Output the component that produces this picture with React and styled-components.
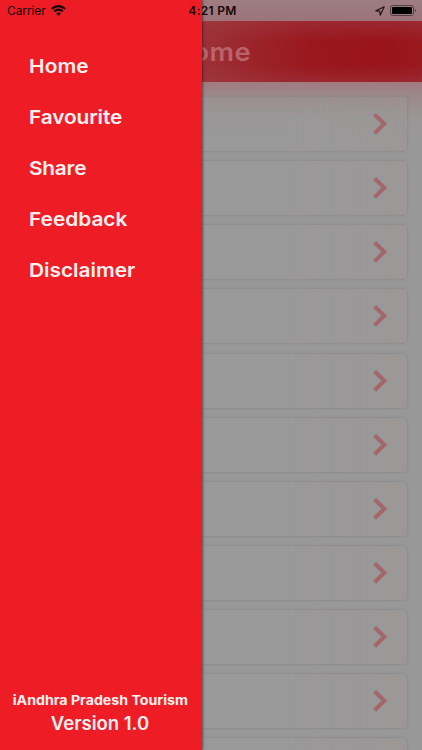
import React from "react";
import styled, { createGlobalStyle } from "styled-components";

const Global = createGlobalStyle`
    * {
        box-sizing: border-box;
    }
    body {
        margin: 0;
        background-color: #999898;
        font-family: Inter, "Open Sans", sans-serif;
    }
`;

const Screen = styled.div`
    position: relative;
    width: 100%;
    height: 750px;
    overflow: hidden;
    background: linear-gradient(#9e7d80 0px, #9c747a 21px, #a17b80 82px, #9c8789 94px, #999696 116px, #999898 140px);
`;

const StatusBar = styled.div`
    position: absolute;
    z-index: 3;
    top: 0;
    left: 0;
    right: 0;
    height: 21px;
    padding: 0 5px 0 7px;
    display: grid;
    grid-template-columns: 1fr auto 1fr;
    align-items: center;
    font-size: 12px;
    color: #160709;
`;

const Side = styled.div`
    display: flex;
    align-items: center;
    justify-content: ${(props) => (props.$end ? "flex-end" : "flex-start")};
    gap: 5px;
    letter-spacing: -0.1px;
`;

const Time = styled.span`
    padding-left: 1px;
    font-weight: 600;
    letter-spacing: 0.3px;
`;

const Header = styled.header`
    height: 61px;
    margin-top: 21px;
    display: flex;
    align-items: center;
    justify-content: center;
    background:
        linear-gradient(rgba(158, 60, 67, 0.5), rgba(158, 30, 36, 0) 35%, rgba(158, 30, 36, 0) 72%, rgba(158, 60, 67, 0.45)),
        linear-gradient(90deg, #9c3138 48%, #9b2429 60%, #99171d 74%, #98141a 92%, #99191f);
`;

const Title = styled.h1`
    margin: 0;
    font-size: 25px;
    font-weight: 600;
    letter-spacing: 0.4px;
    color: #b9636a;
    transform: scaleX(1.09);
`;

const List = styled.div`
    display: flex;
    flex-direction: column;
    gap: 8.15px;
    padding: 14px 14px 0;
`;

const Card = styled.div`
    flex: none;
    height: 56px;
    padding-right: 17px;
    display: flex;
    align-items: center;
    justify-content: flex-end;
    border: 1px solid rgba(130, 126, 128, 0.38);
    border-radius: 5px;
    box-shadow: 0 0 2px rgba(115, 110, 112, 0.28);
    background: linear-gradient(90deg, rgba(155, 155, 155, 0.35) 70%, rgba(158, 151, 150, 0.4));
`;

const Drawer = styled.nav`
    position: absolute;
    z-index: 2;
    top: 0;
    left: 0;
    width: 202px;
    height: 100%;
    padding: 41px 0 14px;
    display: flex;
    flex-direction: column;
    justify-content: space-between;
    background-color: #ee1d25;
    box-shadow: 0 0 3px rgba(25, 5, 7, 0.9);
    color: #fff0f0;
`;

const Menu = styled.div`
    display: flex;
    flex-direction: column;
    padding-left: 28.6px;
`;

// the letters are a little wider than the font's own
const MenuItem = styled.a`
    height: 51px;
    line-height: 51px;
    font-size: 19.3px;
    font-weight: 600;
    letter-spacing: ${(props) => props.$spacing}px;
    transform: scaleX(1.08);
    transform-origin: left;
`;

const Footer = styled.footer`
    display: flex;
    flex-direction: column;
    align-items: center;
    white-space: nowrap;
`;

const AppName = styled.span`
    line-height: 22px;
    font-size: 13px;
    font-weight: 700;
    transform: translate(-1px, -0.4px) scaleX(1.09);
`;

const Version = styled.span`
    line-height: 25px;
    font-size: 18.5px;
    font-weight: 600;
    padding-right: 2px;
`;

const items = [
    { label: "Home", spacing: 0.1 },
    { label: "Favourite", spacing: -0.1 },
    { label: "Share", spacing: -0.2 },
    { label: "Feedback", spacing: 0 },
    { label: "Disclaimer", spacing: 0 },
];

function Wifi() {
    return (
        <svg width="15" height="11" viewBox="0 0 14 10" fill="none" stroke="#160709" strokeWidth="2">
            <path d="M0.8 3.5C4.3 0 9.7 0 13.2 3.5" />
            <path d="M3 5.9C5.3 3.6 8.7 3.6 11 5.9" />
            <path d="M4.8 7.8C6 6.6 8 6.6 9.2 7.8L7 10Z" fill="#160709" stroke="none" />
        </svg>
    );
}

function Location() {
    return (
        <svg width="10" height="10" viewBox="0 0 10 10" fill="none" stroke="#241315" strokeWidth="1.2" strokeLinejoin="round">
            <path d="M9.2 0.8L0.8 4.8L4.7 5.2L5.2 9.2Z" />
        </svg>
    );
}

function Battery() {
    return (
        <svg width="27" height="11" viewBox="0 0 27 11">
            <rect x="0.5" y="0.5" width="23" height="10" rx="2.4" fill="none" stroke="#564043" />
            <rect x="2" y="2" width="20" height="7" rx="1" fill="#000" />
            <path d="M24.8 3.7C26.4 4.3 26.4 6.7 24.8 7.3Z" fill="#564043" />
        </svg>
    );
}

function Chevron() {
    return (
        <svg width="18" height="24" viewBox="0 0 18 24" fill="none" stroke="#a2666b" strokeWidth="4">
            <path d="M2.6 2.4L12.2 11.8L2.6 21.2" />
        </svg>
    );
}

export default function App() {
    return (
        <>
            <Global />
            <Screen>
                <StatusBar>
                    <Side>
                        Carrier
                        <Wifi />
                    </Side>
                    <Time>4:21 PM</Time>
                    <Side $end>
                        <Location />
                        <Battery />
                    </Side>
                </StatusBar>
                <Header>
                    <Title>Home</Title>
                </Header>
                <List>
                    {Array.from({ length: 11 }, (_, i) => (
                        <Card key={i}>
                            <Chevron />
                        </Card>
                    ))}
                </List>
                <Drawer>
                    <Menu>
                        {items.map((item) => (
                            <MenuItem key={item.label} $spacing={item.spacing}>
                                {item.label}
                            </MenuItem>
                        ))}
                    </Menu>
                    <Footer>
                        <AppName>iAndhra Pradesh Tourism</AppName>
                        <Version>Version 1.0</Version>
                    </Footer>
                </Drawer>
            </Screen>
        </>
    );
}
